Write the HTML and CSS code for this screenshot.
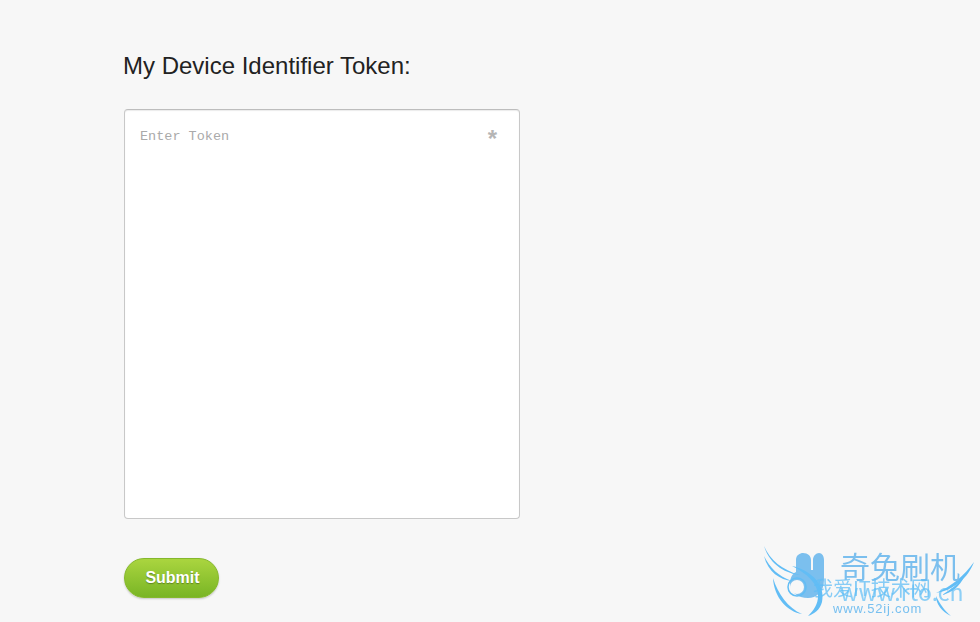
FILE: index.html
```html
<!DOCTYPE html>
<html lang="en">

<head>
  <meta charset="UTF-8" />
  <title>My Device Identifier Token</title>
  <link rel="stylesheet" href="styles.css">
</head>

<body>
  <main class="token-form">
    <h1>My Device Identifier Token:</h1>

    <div class="token-field">
      <textarea placeholder="Enter Token"></textarea>
      <span class="required">*</span>
    </div>

    <button class="submit-btn">Submit</button>
  </main>

  <!-- site watermark in the corner -->
  <div class="watermark">
    <svg class="wm-art" width="216" height="76" viewBox="0 0 216 76">
      <path fill="#7bbfee" d="M32 14 C32 9 36 7 39 7 C44 7 47 10 47 14 V24 H49 V14 C49 10 52 7 55 7 C58 7 60 10 60 14 V34 C60 46 52 52 44 52 C34 52 26 46 26 38 C26 32 28 28 32 26 Z" />
      <g fill="#62bdf5">
        <path d="M0 0 C6 14 18 24 36 29 C24 28 6 20 0 0 Z" />
        <path d="M0 10 C6 22 14 30 28 35 C16 34 4 26 0 10 Z" />
        <path d="M9 32 C14 48 24 62 38 68 C24 66 10 52 9 32 Z" />
        <path d="M28 20 C46 24 62 38 58 56 C56 64 50 68 44 70 C50 64 54 58 54 50 C54 38 44 28 28 20 Z" />
        <path d="M210 16 C204 32 190 44 172 47 C188 40 200 30 210 16 Z" />
        <path d="M200 31 C196 40 188 47 178 49 C186 44 194 38 200 31 Z" />
        <path d="M172 50 C176 58 180 64 187 70 C178 66 172 58 172 50 Z" />
      </g>
      <circle cx="33" cy="41" r="7" fill="#f7f7f7" />
      <circle cx="33" cy="41" r="9" fill="none" stroke="#62bdf5" stroke-width="1.5" />
    </svg>
    <span class="wm-title">奇兔刷机</span>
    <span class="wm-forum">我爱IT技术网</span>
    <span class="wm-url">www.rto.cn</span>
    <span class="wm-small">www.52ij.com</span>
  </div>
</body>

</html>
```

FILE: styles.css
```css
html, body {
  height: 100%;
}

body {
  margin: 0;
  background-color: #f7f7f7;
  font-family: "Liberation Sans", Arial, sans-serif;
  overflow: hidden;
}

.token-form {
  display: flex;
  flex-direction: column;
  align-items: flex-start;
  padding: 51px 0 0 124px;
}

.token-form h1 {
  margin: 0 0 28px -1px;
  font-size: 24px;
  line-height: 30px;
  font-weight: normal;
  color: #222;
}

.token-field {
  position: relative;
  width: 396px;
  height: 410px;
  margin-bottom: 39px;
}

.token-field textarea {
  display: block;
  box-sizing: border-box;
  width: 100%;
  height: 100%;
  padding: 19px 15px;
  border: 1px solid #c8c8c8;
  border-top-color: #bdbdbd;
  border-radius: 4px;
  background-color: #fff;
  box-shadow: inset 0 1px 1px rgba(0, 0, 0, 0.08);
  font-family: "Liberation Mono", "Courier New", monospace;
  font-size: 13.5px;
  line-height: 16px;
  resize: none;
  outline: none;
}

.token-field textarea::placeholder {
  color: #aaa;
  opacity: 1;
}

.required {
  position: absolute;
  top: 18px;
  right: 23px;
  font-size: 24px;
  line-height: 24px;
  font-weight: bold;
  color: #b5b5b5;
}

.submit-btn {
  width: 95px;
  height: 40px;
  padding: 0 0 0 2px;
  border: 1px solid #85b82c;
  border-radius: 20px;
  background: linear-gradient(#aad53f, #79b525);
  box-shadow: 0 1px 2px rgba(0, 0, 0, 0.2);
  color: #fff;
  font-family: "Liberation Sans", Arial, sans-serif;
  font-size: 16px;
  font-weight: bold;
  text-shadow: 0 1px 1px rgba(0, 0, 0, 0.3);
  cursor: pointer;
}

.watermark {
  position: absolute;
  left: 764px;
  top: 546px;
  width: 216px;
  height: 76px;
  filter: blur(0.4px);
}

.wm-art {
  position: absolute;
  left: 0;
  top: 0;
}

.wm-title, .wm-forum, .wm-url, .wm-small {
  position: absolute;
  white-space: nowrap;
  font-family: "Noto Sans CJK SC", "Liberation Sans", sans-serif;
}

.wm-title {
  left: 76px;
  top: 1px;
  font-size: 30px;
  line-height: 36px;
  color: #7bbfee;
}

.wm-forum {
  left: 49px;
  top: 30px;
  font-size: 20px;
  line-height: 24px;
  color: rgba(96, 190, 245, 0.75);
}

.wm-url {
  left: 76px;
  top: 32px;
  font-size: 23px;
  line-height: 26px;
  color: rgba(96, 190, 245, 0.7);
}

.wm-small {
  left: 69px;
  top: 55px;
  font-family: "Liberation Sans", sans-serif;
  font-size: 13px;
  line-height: 16px;
  letter-spacing: 0.8px;
  color: #78c0f0;
}
```
